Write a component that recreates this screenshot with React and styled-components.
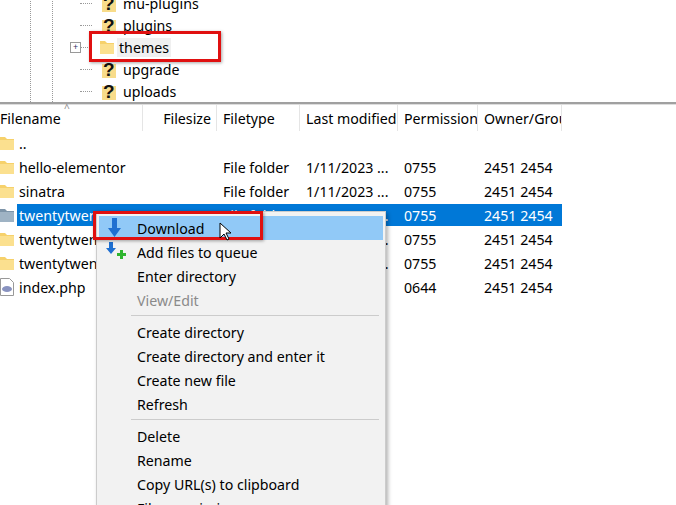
import React from 'react';
import styled, { createGlobalStyle } from 'styled-components';

const Global = createGlobalStyle`
  body { margin: 0; background: #fff; font-family: "Noto Sans", "Open Sans", sans-serif; font-size: 14.2px; color: #000; }
`;

const Page = styled.div`
  position: relative;
  width: 676px;
  height: 505px;
  overflow: hidden;
`;

const Tree = styled.div`
  position: relative;
  height: 110px;
  margin-top: -8px;
`;

const VLine = styled.div`
  position: absolute;
  top: 0;
  bottom: 0;
  left: ${p => p.x}px;
  border-left: 1px dotted #999;
`;

const TreeRow = styled.div`
  display: flex;
  align-items: center;
  height: 22px;
  padding-left: 70px;
`;

const Expander = styled.div`
  width: 9px;
  height: 9px;
  border: 1px solid #999;
  font-size: 9px;
  line-height: 8px;
  text-align: center;
  color: #336;
  margin-right: -1px;
  visibility: ${p => (p.show ? 'visible' : 'hidden')};
`;

const Dots = styled.div`
  width: 12px;
  border-top: 1px dotted #999;
  margin-right: 8px;
`;

const TreeLabel = styled.span`
  margin-left: 3px;
  padding: 0 2px;
  background: ${p => (p.hi ? '#f0f0f0' : 'transparent')};
`;

const RedBox = styled.div`
  position: absolute;
  border: 3px solid #e01010;
  box-shadow: 1px 1px 3px rgba(0,0,0,0.35);
  left: ${p => p.l}px;
  top: ${p => p.t}px;
  width: ${p => p.w}px;
  height: ${p => p.h}px;
  pointer-events: none;
`;

const Divider = styled.div`
  height: 2px;
  background: #a0a0a0;
  border-bottom: 1px solid #ddd;
`;

const cols = '143px 74px 83px 98px 80px 84px';

const Header = styled.div`
  display: grid;
  grid-template-columns: ${cols};
  height: 26px;
  position: relative;
`;

const HeadCell = styled.div`
  display: flex;
  align-items: center;
  justify-content: ${p => (p.right ? 'flex-end' : 'flex-start')};
  padding: 0 ${p => (p.right ? '5px' : '0')} 0 ${p => (p.first ? '0' : '6px')};
  border-right: 1px solid #e5e5e5;
  white-space: nowrap;
  overflow: hidden;
`;

const Caret = styled.div`
  position: absolute;
  left: 64px;
  top: -4px;
  font-size: 10px;
  color: #888;
`;

const Row = styled.div`
  display: grid;
  grid-template-columns: ${cols};
  height: 24px;
  align-items: center;
  white-space: nowrap;
`;

const NameCell = styled.div`
  display: flex;
  align-items: center;
  height: 100%;
`;

const Name = styled.span`
  display: flex;
  align-items: center;
  height: 22px;
  flex: 1;
  padding-left: 2px;
  margin-left: 3px;
  background: ${p => (p.sel ? '#0078d7' : 'transparent')};
  color: ${p => (p.sel ? '#fff' : '#000')};
`;

const Cell = styled.div`
  height: 22px;
  display: flex;
  align-items: center;
  padding-left: 6px;
  overflow: hidden;
  background: ${p => (p.sel ? '#0078d7' : 'transparent')};
  color: ${p => (p.sel ? '#fff' : '#000')};
`;

const Menu = styled.div`
  position: absolute;
  left: 96px;
  top: 211px;
  width: 290px;
  height: 310px;
  background: #f2f2f2;
  border: 1px solid #ccc;
  box-shadow: 2px 2px 4px rgba(0,0,0,0.3);
  padding: 4px 2px;
  box-sizing: border-box;
`;

const Item = styled.div`
  display: flex;
  align-items: center;
  height: 24px;
  padding-left: 38px;
  position: relative;
  color: ${p => (p.disabled ? '#8a8a8a' : '#000')};
  background: ${p => (p.active ? '#91c9f7' : 'transparent')};
`;

const ItemIcon = styled.div`
  position: absolute;
  left: 6px;
  top: 2px;
  width: 22px;
  height: 20px;
`;

const Sep = styled.div`
  height: 1px;
  background: #ccc;
  margin: 3px 4px 4px 32px;
`;

const Folder = ({ dark }) => (
  <svg width="14" height="16" viewBox="0 0 14 16">
    <path d="M0 2h5l2 2h7v11H0z" fill={dark ? '#7d94a8' : '#f6d16b'} />
    <path d="M0 5h14v10H0z" fill={dark ? '#9fb3c4' : '#fbe08f'} />
  </svg>
);

const QFolder = () => (
  <svg width="18" height="18" viewBox="0 0 18 18">
    <path d="M2 4h14v14H2z" fill="#f8dc8a" />
    <text x="3" y="16" fontSize="19" fontWeight="bold" fontFamily="Liberation Sans, sans-serif" fill="#111">?</text>
  </svg>
);

const Php = () => (
  <svg width="14" height="18" viewBox="0 0 14 18">
    <path d="M0.5 0.5h9l4 4v13h-13z" fill="#fff" stroke="#999" />
    <ellipse cx="7" cy="11" rx="5" ry="3" fill="#8892bf" />
  </svg>
);

const treeItems = [
  { name: 'mu-plugins', q: true },
  { name: 'plugins', q: true },
  { name: 'themes', q: false, exp: true },
  { name: 'upgrade', q: true },
  { name: 'uploads', q: true },
];

const files = [
  { name: '..', type: '', date: '', perm: '', own: '' },
  { name: 'hello-elementor', type: 'File folder', date: '1/11/2023 ...', perm: '0755', own: '2451 2454' },
  { name: 'sinatra', type: 'File folder', date: '1/11/2023 ...', perm: '0755', own: '2451 2454' },
  { name: 'twentytwenty', type: 'File folder', date: '1/11/2023 ...', perm: '0755', own: '2451 2454', sel: true },
  { name: 'twentytwentyone', type: 'File folder', date: '1/11/2023 ...', perm: '0755', own: '2451 2454' },
  { name: 'twentytwentytwo', type: 'File folder', date: '1/11/2023 ...', perm: '0755', own: '2451 2454' },
  { name: 'index.php', type: '', date: '', perm: '0644', own: '2451 2454', php: true },
];

const menu = [
  ['Download', 'dl'], ['Add files to queue', 'add'], ['Enter directory'], ['View/Edit', 'dis'], '-',
  ['Create directory'], ['Create directory and enter it'], ['Create new file'], ['Refresh'], '-',
  ['Delete'], ['Rename'], ['Copy URL(s) to clipboard'], ['File permissions...'],
];

export default function App() {
  return (
    <Page>
      <Global />
      <Tree>
        <VLine x={30} />
        <VLine x={52} />
        {treeItems.map(t => (
          <TreeRow key={t.name}>
            <Expander show={t.exp}>+</Expander>
            <Dots />
            {t.q ? <QFolder /> : <Folder />}
            <TreeLabel hi={!t.q}>{t.name}</TreeLabel>
          </TreeRow>
        ))}
      </Tree>
      <Divider />
      <Header>
        <Caret>^</Caret>
        <HeadCell first>Filename</HeadCell>
        <HeadCell right>Filesize</HeadCell>
        <HeadCell>Filetype</HeadCell>
        <HeadCell>Last modified</HeadCell>
        <HeadCell>Permissions</HeadCell>
        <HeadCell>Owner/Group</HeadCell>
      </Header>
      {files.map(f => (
        <Row key={f.name}>
          <NameCell>
            {f.php ? <Php /> : <Folder dark={f.sel} />}
            <Name sel={f.sel}>{f.name}</Name>
          </NameCell>
          <Cell sel={f.sel} />
          <Cell sel={f.sel}>{f.type}</Cell>
          <Cell sel={f.sel}>{f.date}</Cell>
          <Cell sel={f.sel}>{f.perm}</Cell>
          <Cell sel={f.sel}>{f.own}</Cell>
        </Row>
      ))}
      <Menu>
        {menu.map((m, i) =>
          m === '-' ? <Sep key={i} /> : (
            <Item key={i} active={m[1] === 'dl'} disabled={m[1] === 'dis'}>
              {m[1] === 'dl' && (
                <ItemIcon>
                  <svg width="20" height="20" viewBox="0 0 20 20"><path d="M7 0h5v10h4l-6.5 9-6.5-9h4z" fill="#1f6fd1" /></svg>
                </ItemIcon>
              )}
              {m[1] === 'add' && (
                <ItemIcon>
                  <svg width="24" height="22" viewBox="0 0 24 22"><path d="M4 0h4v6h3l-5 6-5-6h3z" fill="#1f6fd1" /><path d="M12 11h3v-3h3v3h3v3h-3v3h-3v-3h-3z" fill="#2fb52f" /></svg>
                </ItemIcon>
              )}
              {m[0]}
            </Item>
          )
        )}
      </Menu>
      <RedBox l={89} t={31} w={126} h={25} />
      <RedBox l={93} t={211} w={164} h={23} />
      <svg style={{ position: 'absolute', left: 219, top: 222 }} width="14" height="20" viewBox="0 0 14 20">
        <path d="M1 1v15l4-4 3 6 2-1-3-6h5z" fill="#fff" stroke="#000" />
      </svg>
    </Page>
  );
}
